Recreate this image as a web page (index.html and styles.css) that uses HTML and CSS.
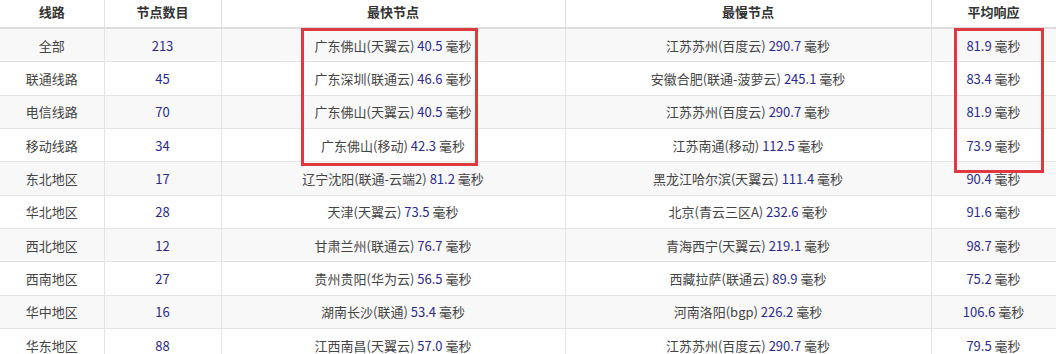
FILE: index.html
```html
<!DOCTYPE html>
<html lang="zh-CN">
<head>
<meta charset="utf-8">
<link rel="stylesheet" href="styles.css">
</head>
<body>
<div class="wrap">
<table class="speed">
  <colgroup>
    <col class="c1"><col class="c2"><col class="c3"><col class="c4"><col class="c5">
  </colgroup>
  <thead>
    <tr><th>线路</th><th>节点数目</th><th>最快节点</th><th>最慢节点</th><th>平均响应</th></tr>
  </thead>
  <tbody>
    <tr><td>全部</td><td class="n">213</td><td>广东佛山(天翼云) <span class="n">40.5</span> 毫秒</td><td>江苏苏州(百度云) <span class="n">290.7</span> 毫秒</td><td><span class="n">81.9</span> 毫秒</td></tr>
    <tr><td>联通线路</td><td class="n">45</td><td>广东深圳(联通云) <span class="n">46.6</span> 毫秒</td><td>安徽合肥(联通-菠萝云) <span class="n">245.1</span> 毫秒</td><td><span class="n">83.4</span> 毫秒</td></tr>
    <tr><td>电信线路</td><td class="n">70</td><td>广东佛山(天翼云) <span class="n">40.5</span> 毫秒</td><td>江苏苏州(百度云) <span class="n">290.7</span> 毫秒</td><td><span class="n">81.9</span> 毫秒</td></tr>
    <tr><td>移动线路</td><td class="n">34</td><td>广东佛山(移动) <span class="n">42.3</span> 毫秒</td><td>江苏南通(移动) <span class="n">112.5</span> 毫秒</td><td><span class="n">73.9</span> 毫秒</td></tr>
    <tr><td>东北地区</td><td class="n">17</td><td>辽宁沈阳(联通-云端2) <span class="n">81.2</span> 毫秒</td><td>黑龙江哈尔滨(天翼云) <span class="n">111.4</span> 毫秒</td><td><span class="n">90.4</span> 毫秒</td></tr>
    <tr><td>华北地区</td><td class="n">28</td><td>天津(天翼云) <span class="n">73.5</span> 毫秒</td><td>北京(青云三区A) <span class="n">232.6</span> 毫秒</td><td><span class="n">91.6</span> 毫秒</td></tr>
    <tr><td>西北地区</td><td class="n">12</td><td>甘肃兰州(联通云) <span class="n">76.7</span> 毫秒</td><td>青海西宁(天翼云) <span class="n">219.1</span> 毫秒</td><td><span class="n">98.7</span> 毫秒</td></tr>
    <tr><td>西南地区</td><td class="n">27</td><td>贵州贵阳(华为云) <span class="n">56.5</span> 毫秒</td><td>西藏拉萨(联通云) <span class="n">89.9</span> 毫秒</td><td><span class="n">75.2</span> 毫秒</td></tr>
    <tr><td>华中地区</td><td class="n">16</td><td>湖南长沙(联通) <span class="n">53.4</span> 毫秒</td><td>河南洛阳(bgp) <span class="n">226.2</span> 毫秒</td><td><span class="n">106.6</span> 毫秒</td></tr>
    <tr><td>华东地区</td><td class="n">88</td><td>江西南昌(天翼云) <span class="n">57.0</span> 毫秒</td><td>江苏苏州(百度云) <span class="n">290.7</span> 毫秒</td><td><span class="n">79.5</span> 毫秒</td></tr>
  </tbody>
</table>
<div class="mark mark-fast"></div>
<div class="mark mark-avg"></div>
</div>
</body>
</html>
```

FILE: styles.css
```css
html, body {
  margin: 0;
  padding: 0;
  background: #fff;
}
body {
  font-family: "Noto Sans CJK SC", "Microsoft YaHei", sans-serif;
  font-size: 13px;
  color: #444;
  overflow: hidden;
}
.wrap {
  position: relative;
  width: 1056px;
}
.speed {
  width: 1056px;
  border-collapse: collapse;
  table-layout: fixed;
}
.c1 { width: 104px; }
.c2 { width: 117px; }
.c3 { width: 344px; }
.c4 { width: 366px; }
.c5 { width: 125px; }
.speed th {
  height: 27px;
  padding: 0;
  font-weight: bold;
  color: #333;
  text-align: center;
  border-left: 1px solid #e2e2e2;
  border-right: 1px solid #e2e2e2;
  border-bottom: 2px solid #dddddd;
  line-height: 24px;
  vertical-align: top;
}
.speed td {
  height: 32.33px;
  padding: 0;
  text-align: center;
  border: 1px solid #e4e4e4;
  white-space: nowrap;
}
.speed th:first-child, .speed td:first-child { border-left: none; }
.speed tbody tr:nth-child(odd) { background: #f8f8f8; }
.n { color: #2b2b8f; }
.mark {
  position: absolute;
  border: 3px solid #dc3a40;
  box-sizing: border-box;
}
.mark-fast {
  left: 301px;
  top: 28px;
  width: 177px;
  height: 138px;
}
.mark-avg {
  left: 954px;
  top: 28px;
  width: 90px;
  height: 145px;
}
```
